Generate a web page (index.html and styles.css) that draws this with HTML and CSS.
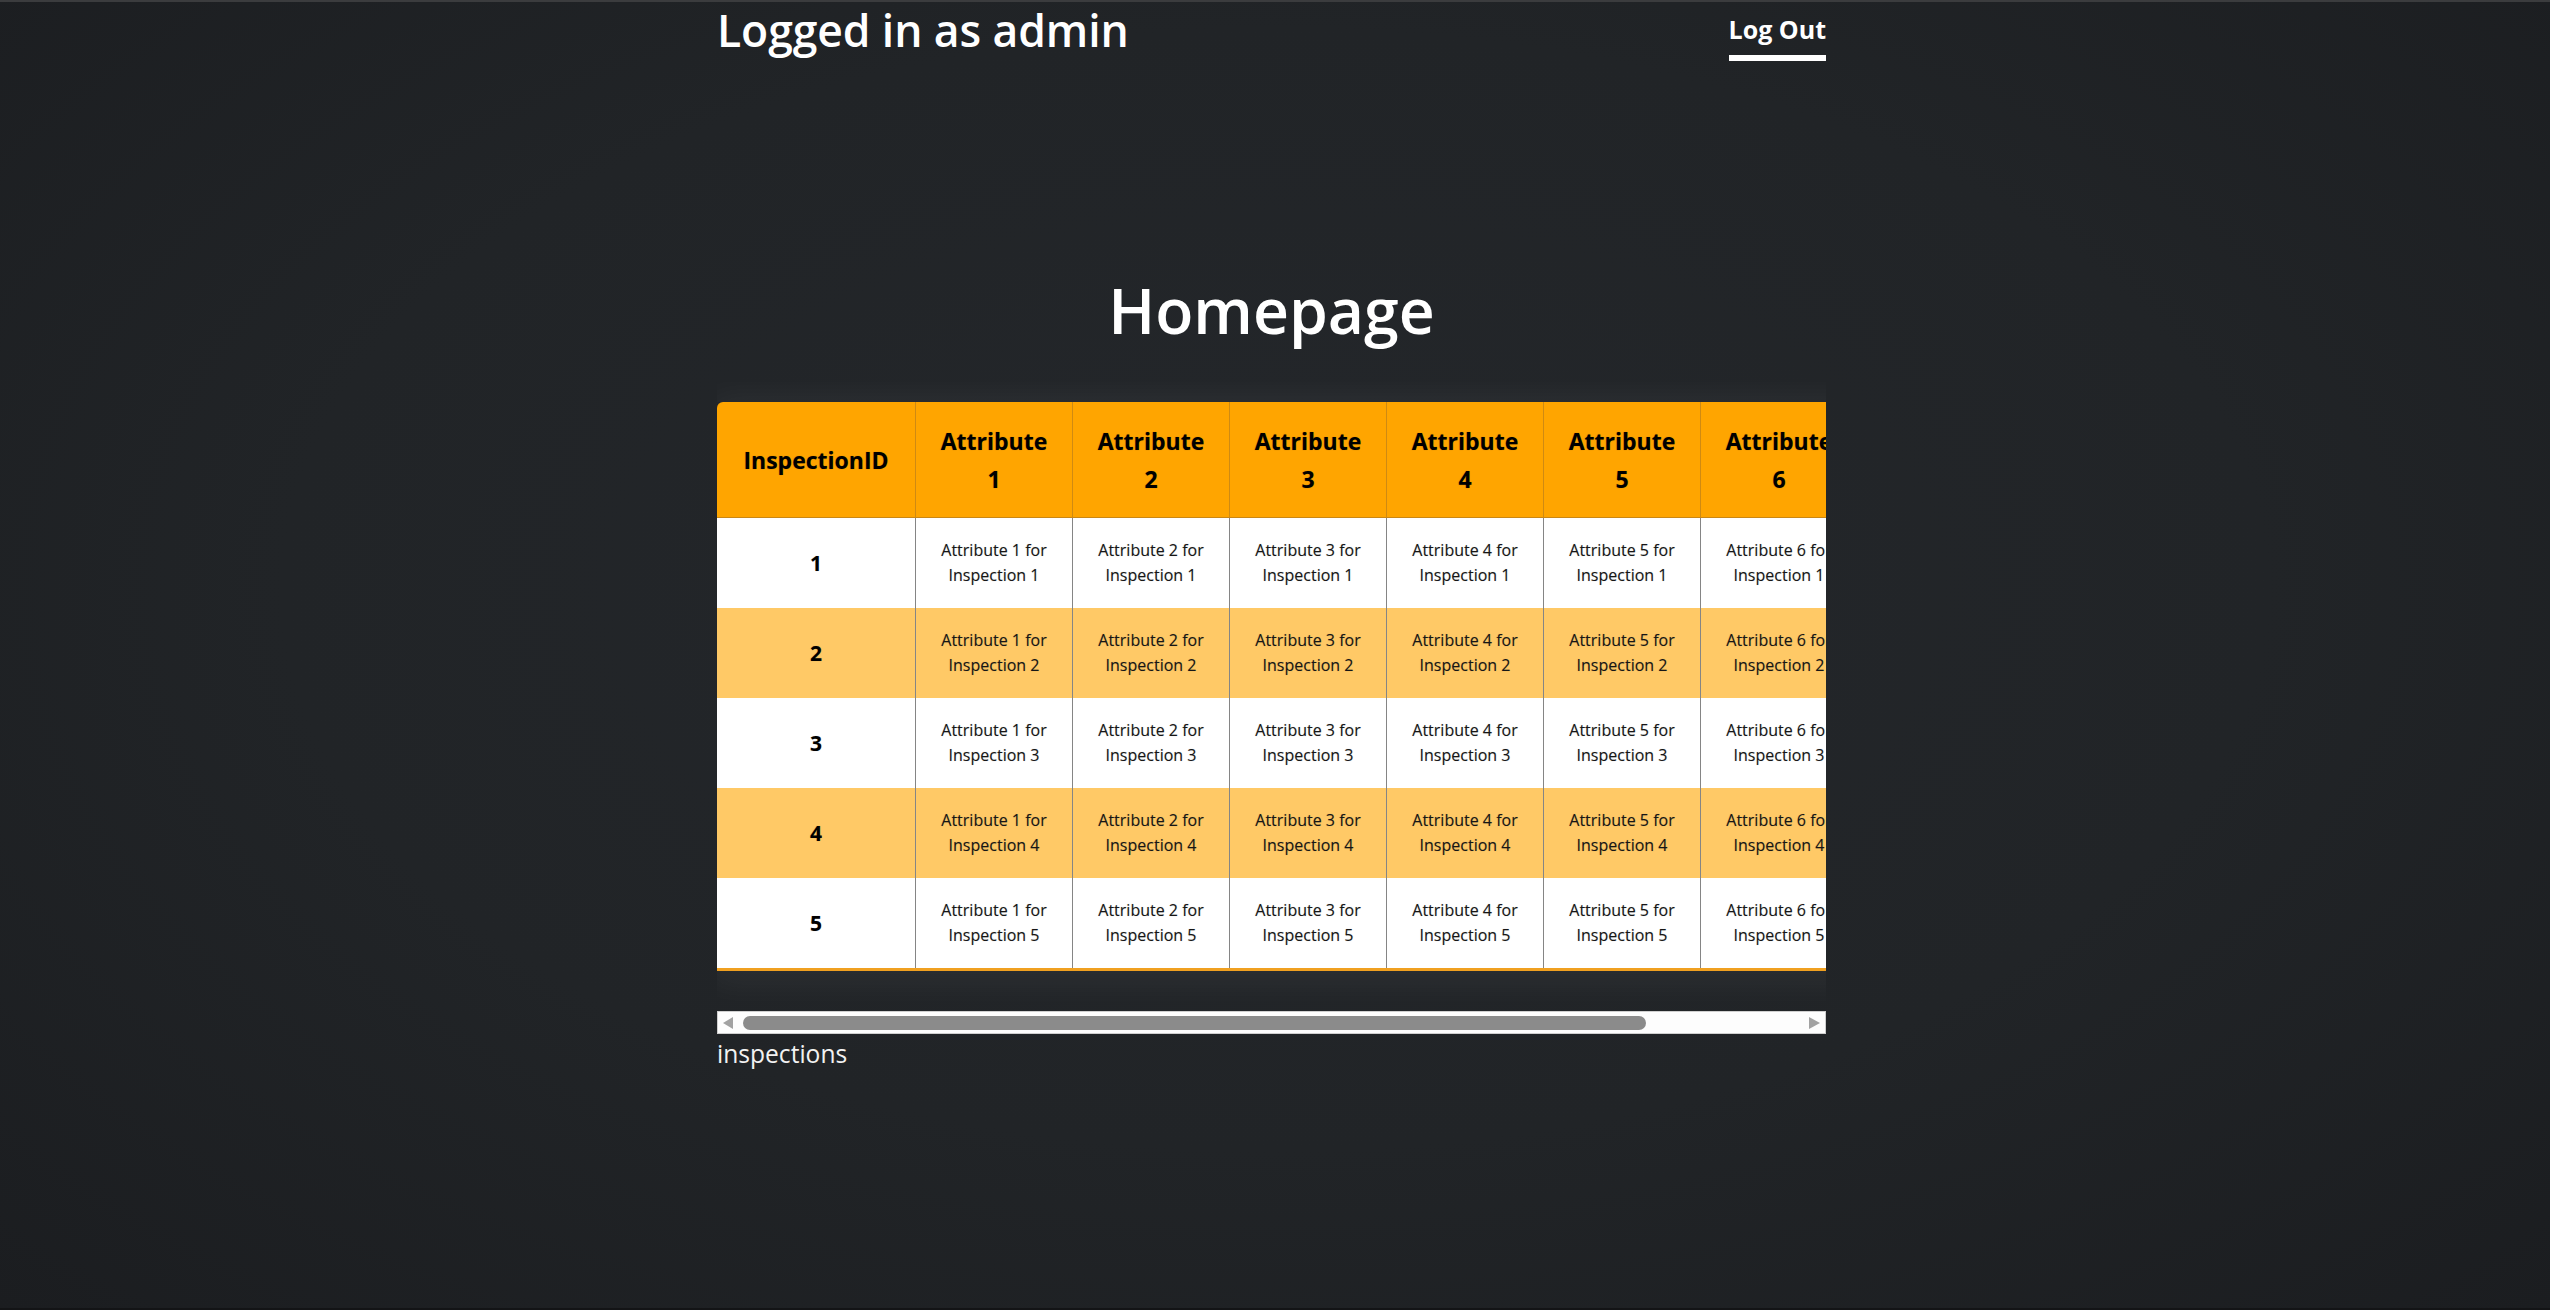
FILE: index.html
```html
<!DOCTYPE html>
<html lang="en">
<head>
<meta charset="utf-8">
<title>Homepage</title>
<link rel="stylesheet" href="styles.css">
</head>
<body>
<div class="page">
  <header class="topbar">
    <h2 class="user">Logged in as admin</h2>
    <a class="logout" href="#">Log Out</a>
  </header>

  <h1 class="title">Homepage</h1>

  <div class="table-wrap">
    <table class="grid">
      <colgroup>
        <col class="c-id">
        <col class="c-attr"><col class="c-attr"><col class="c-attr"><col class="c-attr"><col class="c-attr"><col class="c-attr"><col class="c-attr">
      </colgroup>
      <thead>
        <tr>
          <th>InspectionID</th>
          <th>Attribute 1</th><th>Attribute 2</th><th>Attribute 3</th><th>Attribute 4</th><th>Attribute 5</th><th>Attribute 6</th><th>Attribute 7</th>
        </tr>
      </thead>
      <tbody>
        <tr>
          <td class="id">1</td>
          <td>Attribute 1 for Inspection 1</td><td>Attribute 2 for Inspection 1</td><td>Attribute 3 for Inspection 1</td><td>Attribute 4 for Inspection 1</td><td>Attribute 5 for Inspection 1</td><td>Attribute 6 for Inspection 1</td><td>Attribute 7 for Inspection 1</td>
        </tr>
        <tr>
          <td class="id">2</td>
          <td>Attribute 1 for Inspection 2</td><td>Attribute 2 for Inspection 2</td><td>Attribute 3 for Inspection 2</td><td>Attribute 4 for Inspection 2</td><td>Attribute 5 for Inspection 2</td><td>Attribute 6 for Inspection 2</td><td>Attribute 7 for Inspection 2</td>
        </tr>
        <tr>
          <td class="id">3</td>
          <td>Attribute 1 for Inspection 3</td><td>Attribute 2 for Inspection 3</td><td>Attribute 3 for Inspection 3</td><td>Attribute 4 for Inspection 3</td><td>Attribute 5 for Inspection 3</td><td>Attribute 6 for Inspection 3</td><td>Attribute 7 for Inspection 3</td>
        </tr>
        <tr>
          <td class="id">4</td>
          <td>Attribute 1 for Inspection 4</td><td>Attribute 2 for Inspection 4</td><td>Attribute 3 for Inspection 4</td><td>Attribute 4 for Inspection 4</td><td>Attribute 5 for Inspection 4</td><td>Attribute 6 for Inspection 4</td><td>Attribute 7 for Inspection 4</td>
        </tr>
        <tr>
          <td class="id">5</td>
          <td>Attribute 1 for Inspection 5</td><td>Attribute 2 for Inspection 5</td><td>Attribute 3 for Inspection 5</td><td>Attribute 4 for Inspection 5</td><td>Attribute 5 for Inspection 5</td><td>Attribute 6 for Inspection 5</td><td>Attribute 7 for Inspection 5</td>
        </tr>
      </tbody>
    </table>
  </div>

  <div class="hscroll" aria-hidden="true">
    <span class="arrow arrow-left"></span>
    <span class="thumb"></span>
    <span class="spacer"></span>
    <span class="arrow arrow-right"></span>
  </div>

  <p class="caption">inspections</p>
</div>
</body>
</html>
```

FILE: styles.css
```css
html, body {
  height: 100%;
}

body {
  margin: 0;
  padding-right: 7px;
  box-sizing: border-box;
  min-height: 100vh;
  border-top: 2px solid #3b3c3e;
  border-bottom: 2px solid #131416;
  background: radial-gradient(ellipse at 50% 45%, #24272b 0%, #212427 55%, #1b1d20 100%);
  font-family: "Open Sans", "Noto Sans", sans-serif;
  color: #ffffff;
}

.page {
  width: 1109px;
  margin: 0 auto;
}

.topbar {
  display: flex;
  justify-content: space-between;
  align-items: flex-start;
}

.user {
  margin: 0;
  font-size: 44.5px;
  font-weight: 600;
  line-height: 56px;
  letter-spacing: -0.1px;
}

.logout {
  display: inline-block;
  margin-top: 11px;
  padding-bottom: 9px;
  border-bottom: 6px solid #ffffff;
  color: #ffffff;
  text-decoration: none;
  font-size: 25px;
  font-weight: 700;
  line-height: 33px;
}

.title {
  margin: 206px 0 0;
  text-align: center;
  font-size: 62.5px;
  font-weight: 600;
  line-height: 86px;
}

.table-wrap {
  margin-top: 29px;
  padding: 20px 0 40px;
  overflow: hidden;
}

.grid {
  width: 1297px;
  table-layout: fixed;
  border-collapse: separate;
  border-spacing: 0;
  box-shadow: 0 4px 34px 8px rgba(255, 255, 255, 0.05);
  border-bottom: 3px solid #f0a020;
  color: #111111;
}

.c-id { width: 198px; }
.c-attr { width: 157px; }

.grid th {
  height: 116px;
  padding: 0 18px;
  background: #ffa500;
  border-left: 1px solid #cf8a12;
  border-bottom: 1px solid #c98716;
  font-size: 23px;
  font-weight: 700;
  line-height: 38px;
  text-align: center;
  color: #000000;
  text-shadow: 0 0 1px rgba(0, 0, 0, 0.35);
  box-sizing: border-box;
}

.grid th:first-child {
  border-left: none;
  border-top-left-radius: 6px;
  padding: 0 8px;
}

.grid td {
  height: 90px;
  padding: 0 12px;
  border-left: 1px solid #858585;
  background: #ffffff;
  font-size: 16px;
  line-height: 25px;
  text-align: center;
  color: #161616;
  text-shadow: 0 0 1px rgba(0, 0, 0, 0.25);
  box-sizing: border-box;
}

.grid td.id {
  border-left: none;
  font-size: 21px;
  font-weight: 700;
  color: #000000;
}

.grid tbody tr:nth-child(even) td {
  background: #ffc966;
}

.hscroll {
  display: flex;
  align-items: center;
  height: 23px;
  box-sizing: border-box;
  background: #fdfdfd;
  border: 1px solid #cfcfcf;
}

.arrow {
  width: 0;
  height: 0;
  border-top: 6px solid transparent;
  border-bottom: 6px solid transparent;
}

.arrow-left {
  margin-left: 5px;
  border-right: 10px solid #a2a2a2;
}

.arrow-right {
  margin-right: 5px;
  border-left: 11px solid #a2a2a2;
}

.thumb {
  width: 903px;
  height: 14px;
  margin-left: 10px;
  border-radius: 7px;
  background: #8b8b8b;
}

.spacer {
  flex: 1;
}

.caption {
  margin: 3px 0 0;
  font-size: 24.6px;
  line-height: 33px;
  color: #f2f2f2;
}
```
